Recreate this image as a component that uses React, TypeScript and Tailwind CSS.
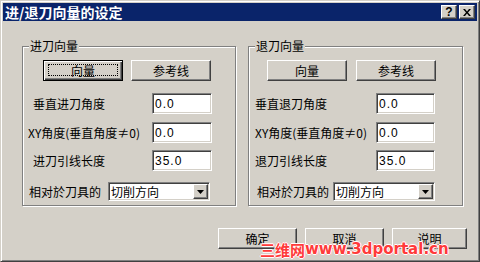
const raised =
  "relative flex items-center justify-center border border-t-white border-l-white border-r-[#404040] border-b-[#404040] shadow-[inset_-1px_-1px_0_#808080] bg-[#d4d0c8]";
const sunken =
  "border border-t-[#808080] border-l-[#808080] border-r-white border-b-white shadow-[inset_1px_1px_0_#404040,inset_-1px_-1px_0_#d4d0c8] bg-white";

function Btn({ label, w = "w-[80px]", isDefault = false }: { label: string; w?: string; isDefault?: boolean }) {
  if (isDefault) {
    return (
      <div className={`relative flex items-center justify-center h-[21px] ${w} border border-black bg-[#d4d0c8] shadow-[inset_1px_1px_0_#fff,inset_-1px_-1px_0_#404040,inset_-2px_-2px_0_#808080]`}>
        <span className="absolute left-[4px] right-[4px] top-[3px] bottom-[4px] border border-dotted border-black" />
        <span className="text-[12px] leading-[12px] text-black">{label}</span>
      </div>
    );
  }
  return (
    <div className={`${raised} h-[21px] ${w}`}>
      <span className="text-[12px] leading-[12px] text-black">{label}</span>
    </div>
  );
}

function Field({ value, w }: { value: string; w: string }) {
  return (
    <div className={`${sunken} h-[21px] ${w} flex items-center pl-[2px]`}>
      <span className="font-['Liberation_Sans',sans-serif] text-[12px] leading-[12px] tracking-[1px] text-black">{value}</span>
    </div>
  );
}

function Combo() {
  return (
    <div className={`${sunken} h-[19px] w-[102px] flex items-center pl-[2px] pr-[1px]`}>
      <span className="flex-1 text-[12px] leading-[12px] text-black">切削方向</span>
      <div className={`${raised} h-[15px] w-[15px]`}>
        <svg width="7" height="4" viewBox="0 0 7 4">
          <path d="M0 0h7L3.5 4z" fill="#000" />
        </svg>
      </div>
    </div>
  );
}

function Group({
  title,
  verb,
  w,
  btnPad,
  btnGap,
  labelPad,
  labelW,
  xyPad,
  xyW,
  fieldW,
  comboPad,
  comboGap,
  isDefault,
}: {
  title: string;
  verb: string;
  w: string;
  btnPad: string;
  btnGap: string;
  labelPad: string;
  labelW: string;
  xyPad: string;
  xyW: string;
  fieldW: string;
  comboPad: string;
  comboGap: string;
  isDefault?: boolean;
}) {
  return (
    <div className={`relative ${w} h-[160px] border border-[#808080] shadow-[1px_1px_0_#fff,inset_1px_1px_0_#fff] flex flex-col`}>
      <span className="absolute left-[6px] top-[-7px] px-[1px] bg-[#d4d0c8] text-[12px] leading-[12px] text-black">{title}</span>

      <div className={`flex mt-[13px] ${btnPad} ${btnGap}`}>
        <Btn label="向量" isDefault={isDefault} />
        <Btn label="参考线" />
      </div>

      <div className={`flex items-center mt-[12px] ${labelPad}`}>
        <span className={`${labelW} text-[12px] leading-[12px] text-black`}>垂直{verb}刀角度</span>
        <Field value="0.0" w={fieldW} />
      </div>

      <div className={`flex items-center mt-[8px] ${xyPad}`}>
        <span className={`${xyW} text-[12px] leading-[12px] text-black`}>XY角度(垂直角度≠0)</span>
        <Field value="0.0" w={fieldW} />
      </div>

      <div className={`flex items-center mt-[7px] ${labelPad}`}>
        <span className={`${labelW} text-[12px] leading-[12px] text-black`}>{verb}刀引线长度</span>
        <Field value="35.0" w={fieldW} />
      </div>

      <div className={`flex items-center mt-[11px] ${comboPad} ${comboGap}`}>
        <span className="text-[12px] leading-[12px] text-black">相对於刀具的</span>
        <Combo />
      </div>
    </div>
  );
}

export default function App() {
  return (
    <div className="relative w-[480px] h-[262px] bg-[#d4d0c8] border border-t-[#d4d0c8] border-l-[#d4d0c8] border-r-[#404040] border-b-[#404040] shadow-[inset_1px_1px_0_#fff,inset_-1px_-1px_0_#808080] p-[2px] font-['Noto_Sans_CJK_SC',sans-serif] overflow-hidden">
      {/* title bar */}
      <div className="h-[18px] bg-[#0a246a] flex items-center pl-[2px] pr-[2px]">
        <span className="flex-1 text-[14px] leading-[14px] font-bold text-white">进/退刀向量的设定</span>
        <div className="flex gap-[2px]">
          <div className={`${raised} h-[14px] w-[16px]`}>
            <span className="font-['Liberation_Sans',sans-serif] text-[12px] leading-[12px] font-bold text-black">?</span>
          </div>
          <div className={`${raised} h-[14px] w-[16px]`}>
            <svg width="8" height="7" viewBox="0 0 8 7">
              <path d="M0 0h2l2 2.5L6 0h2L5 3.5 8 7H6L4 4.5 2 7H0l3-3.5z" fill="#000" />
            </svg>
          </div>
        </div>
      </div>

      {/* group boxes */}
      <div className="flex pl-[19px] pt-[25px] gap-[12px]">
        <Group
          title="进刀向量"
          verb="进"
          w="w-[214px]"
          btnPad="pl-[20px]"
          btnGap="gap-[8px]"
          labelPad="pl-[10px]"
          labelW="w-[119px]"
          xyPad="pl-[5px]"
          xyW="w-[124px]"
          fieldW="w-[60px]"
          comboPad="pl-[6px]"
          comboGap="gap-[7px]"
          isDefault
        />
        <Group
          title="退刀向量"
          verb="退"
          w="w-[215px]"
          btnPad="pl-[18px]"
          btnGap="gap-[9px]"
          labelPad="pl-[6px]"
          labelW="w-[121px]"
          xyPad="pl-[6px]"
          xyW="w-[121px]"
          fieldW="w-[59px]"
          comboPad="pl-[8px]"
          comboGap="gap-[4px]"
        />
      </div>

      {/* bottom buttons */}
      <div className="flex gap-[8px] mt-[22px] pl-[215px]">
        <Btn label="确定" w="w-[79px]" />
        <Btn label="取消" w="w-[79px]" />
        <Btn label="说明" w="w-[75px]" />
      </div>

      {/* watermark */}
      <div className="absolute left-[259px] top-[241px] flex items-center text-[#ff3a3a] font-bold [text-shadow:1px_0_#fff,-1px_0_#fff,0_1px_#fff,0_-1px_#fff,1px_1px_#ffb0b0,-1px_-1px_#ffb0b0]">
        <span className="text-[15px] leading-[15px]">三维网</span>
        <span className="font-['DejaVu_Sans',sans-serif] text-[15px] leading-[15px]">www.3dportal.cn</span>
      </div>
    </div>
  );
}
